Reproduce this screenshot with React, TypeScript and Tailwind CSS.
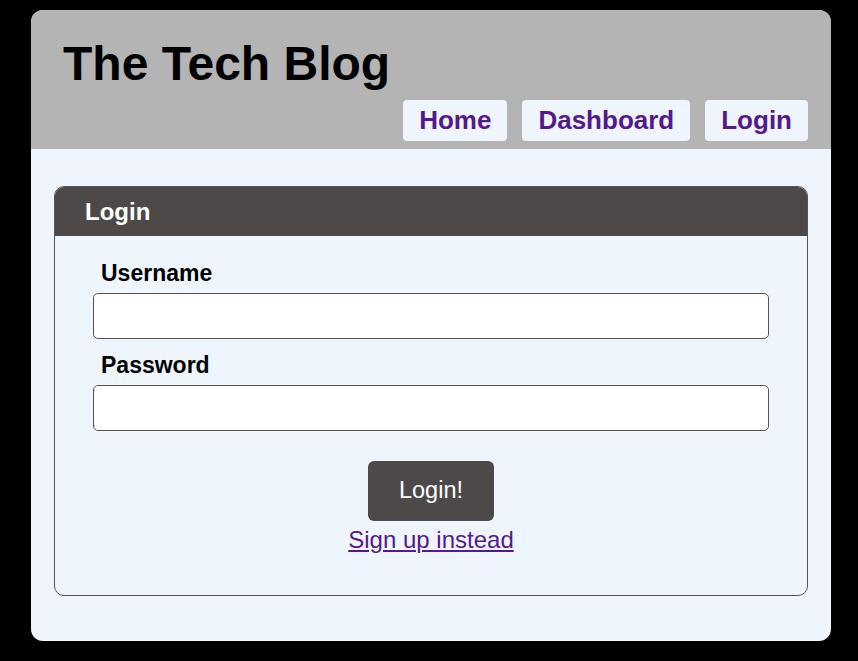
export default function App() {
  return (
    <div className="min-h-screen bg-black px-[31px] py-[10px] font-['Liberation_Sans',Arial,sans-serif]">
      <div className="w-[800px] h-[631px] rounded-xl overflow-hidden bg-[#eef5fd] flex flex-col">
        <header className="bg-[#b4b4b4] h-[139px] flex flex-col px-[23px]">
          <h1 className="pl-[9px] pt-[24px] text-[48px] leading-[60px] font-bold text-black">The Tech Blog</h1>
          <nav className="mt-[6px] flex justify-end gap-[15px]">
            {["Home", "Dashboard", "Login"].map((n) => (
              <a
                key={n}
                href="#"
                className="h-[41px] px-[16px] flex items-center rounded bg-[#eef5fd] text-[#55198b] text-[26px] font-bold"
              >
                {n}
              </a>
            ))}
          </nav>
        </header>
        <main className="px-[23px] pt-[37px]">
          <section className="w-[754px] h-[410px] border border-[#555] rounded-[10px] overflow-hidden">
            <div className="h-[49px] bg-[#4d4948] pl-[30px] flex items-center">
              <h2 className="text-[24px] font-bold text-white">Login</h2>
            </div>
            <form className="px-[38px] pt-[24px] flex flex-col" onSubmit={(e) => e.preventDefault()}>
              <label className="pl-[8px] text-[23px] font-bold text-black leading-[26px]">Username</label>
              <input className="mt-[7px] h-[46px] w-full bg-white border border-[#555] rounded-[5px] outline-none px-2" />
              <label className="mt-[13px] pl-[8px] text-[23px] font-bold text-black leading-[26px]">Password</label>
              <input type="password" className="mt-[7px] h-[46px] w-full bg-white border border-[#555] rounded-[5px] outline-none px-2" />
              <div className="mt-[30px] flex flex-col items-center">
                <button className="w-[126px] h-[60px] rounded-md bg-[#4d4948] text-white text-[23.5px]">Login!</button>
                <a href="#" className="mt-[4px] text-[24px] leading-[30px] text-[#55198b] underline">Sign up instead</a>
              </div>
            </form>
          </section>
        </main>
      </div>
    </div>
  );
}
